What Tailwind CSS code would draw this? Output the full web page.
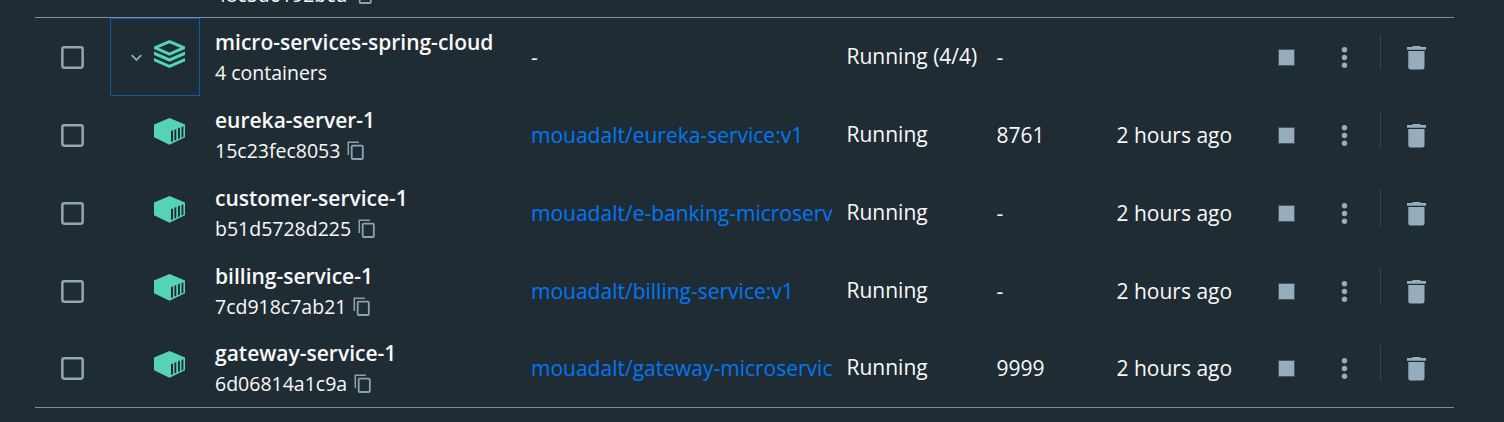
<!DOCTYPE html>
<html lang="en">
<head>
<meta charset="utf-8">
<title>Containers</title>
<script src="https://cdn.jsdelivr.net/npm/@tailwindcss/browser@4"></script>
</head>
<body class="h-[422px] overflow-hidden bg-[#202c33] font-['Open_Sans',sans-serif] text-[21px] leading-[30px] text-[#f9f9fa]">
<svg class="hidden">
  <symbol id="copy" viewBox="0 0 18 20"><path d="M1.3 14V1.3H11.8" fill="none" stroke="currentColor" stroke-width="1.5"/><rect x="4.7" y="4.6" width="11.1" height="13.4" rx="1" fill="none" stroke="currentColor" stroke-width="1.8"/></symbol>
  <symbol id="cube" viewBox="0 0 31 27"><path fill="currentColor" fill-rule="evenodd" d="M15.5 0 31 6.4V19.2L15.5 26.7 0 19.2V6.4ZM17 13V24L19 23.2V12.4ZM20.4 11.8V22.6L22.3 21.8V11.1ZM24 10.3V21.1L25.9 20.3V9.6ZM27.5 9V19.6L29.4 18.8V8.3Z"/></symbol>
  <symbol id="stack" viewBox="0 0 31 28"><path fill="currentColor" fill-rule="evenodd" d="M15.5 0 31 6.6V9L15.5 15.7 0 9V6.6ZM15.5 3.2 4.8 7.8 15.5 12.4 26.2 7.8ZM0 11.6 15.5 18.3 31 11.6V14.9L15.5 21.8 0 14.9ZM0 18 15.5 24.7 31 18V21.2L15.5 28 0 21.2Z"/></symbol>
  <symbol id="trash" viewBox="0 0 19 24"><path fill="currentColor" d="M6 0h7l1 1h5V3.7H0V1h5ZM1.3 5h16.2V21a2.5 2.5 0 0 1-2.5 2.5H3.8a2.5 2.5 0 0 1-2.5-2.5Z"/></symbol>
  <symbol id="dots" viewBox="0 0 7 22"><g fill="currentColor"><circle cx="3.5" cy="2.8" r="2.7"/><circle cx="3.5" cy="10.5" r="2.7"/><circle cx="3.5" cy="18.3" r="2.7"/></g></symbol>
</svg>
<main class="ml-[35px] w-[1419px]">
  <header class="flex h-[18px] items-end overflow-hidden border-b border-[#768e9e] pl-[180px]">
    <div class="mb-[9px] flex items-center gap-[7px] text-[19.5px] leading-[26px]"><span>48c5d6192bcd</span><svg class="h-[20px] w-[18px] text-[#8ba3b4]"><use href="#copy"/></svg></div>
  </header>
  <div id="rows" class="h-[390px] border-b border-[#768e9e]"></div>
</main>
<script>
const data = [
  ['micro-services-spring-cloud', '4 containers', '-', 'Running (4/4)', '-', ''],
  ['eureka-server-1', '15c23fec8053', 'mouadalt/eureka-service:v1', 'Running', '8761', '2 hours ago'],
  ['customer-service-1', 'b51d5728d225', 'mouadalt/e-banking-microserv', 'Running', '-', '2 hours ago'],
  ['billing-service-1', '7cd918c7ab21', 'mouadalt/billing-service:v1', 'Running', '-', '2 hours ago'],
  ['gateway-service-1', '6d06814a1c9a', 'mouadalt/gateway-microservic', 'Running', '9999', '2 hours ago'],
];
document.getElementById('rows').innerHTML = data.map((r, i) => `
<div class="grid grid-cols-[75px_90px_316px_316px_150px_120px_155px_58px_65px_74px] ${i === 3 ? 'h-[77px]' : 'h-[78px]'}">
  <div class="pl-[26px] pt-[28px]"><svg class="h-[23px] w-[23px]" viewBox="0 0 23 23"><rect x="1.35" y="1.35" width="20.3" height="20.3" rx="1.8" fill="none" stroke="#8fa7b7" stroke-width="2.5"/></svg></div>
  ${i === 0
    ? `<div class="flex border border-[#1059a8] pl-[19px] pt-[21px]"><svg class="mt-[14px] h-[8px] w-[13px]" viewBox="-0.5 0 13 8"><path d="M1.2 1.2 6 6l4.8-4.8" fill="none" stroke="#8fa7b7" stroke-width="1.8"/></svg><svg class="ml-[11px] h-[28px] w-[31px] text-[#55d3b4]"><use href="#stack"/></svg></div>`
    : `<div class="pl-[44px] pt-[22px]"><svg class="h-[27px] w-[31px] text-[#55d3b4]"><use href="#cube"/></svg></div>`}
  <div class="pl-[15px] pt-[9px]">
    <div class="whitespace-nowrap font-semibold">${r[0]}</div>
    <div class="mt-px flex items-center gap-[7px] text-[19.5px]"><span>${r[1]}</span>${i ? '<svg class="h-[20px] w-[18px] text-[#8ba3b4]"><use href="#copy"/></svg>' : ''}</div>
  </div>
  <div class="pl-[15px] pt-[24px]"><div class="overflow-hidden whitespace-nowrap ${i ? 'text-[#0077f8]' : ''}">${r[2]}</div></div>
  <div class="whitespace-nowrap pl-[14.5px] pt-[23px]">${r[3]}</div>
  <div class="pl-[14.5px] pt-[24px]">${r[4]}</div>
  <div class="whitespace-nowrap pl-[14.5px] pt-[24px]">${r[5]}</div>
  <div class="flex justify-center pt-[31px]"><div class="h-[17px] w-[17px] border border-[#435561] bg-[#96adbd]"></div></div>
  <div class="flex pl-[26px] pt-[29px]"><svg class="h-[22px] w-[7px] text-[#96adbd]"><use href="#dots"/></svg></div>
  <div><div class="mt-[16px] flex h-[36px] border-l border-[#36454f] pl-[26px] pt-[12px]"><svg class="h-[24px] w-[19px] text-[#96adbd]"><use href="#trash"/></svg></div></div>
</div>`).join('');
</script>
</body>
</html>
